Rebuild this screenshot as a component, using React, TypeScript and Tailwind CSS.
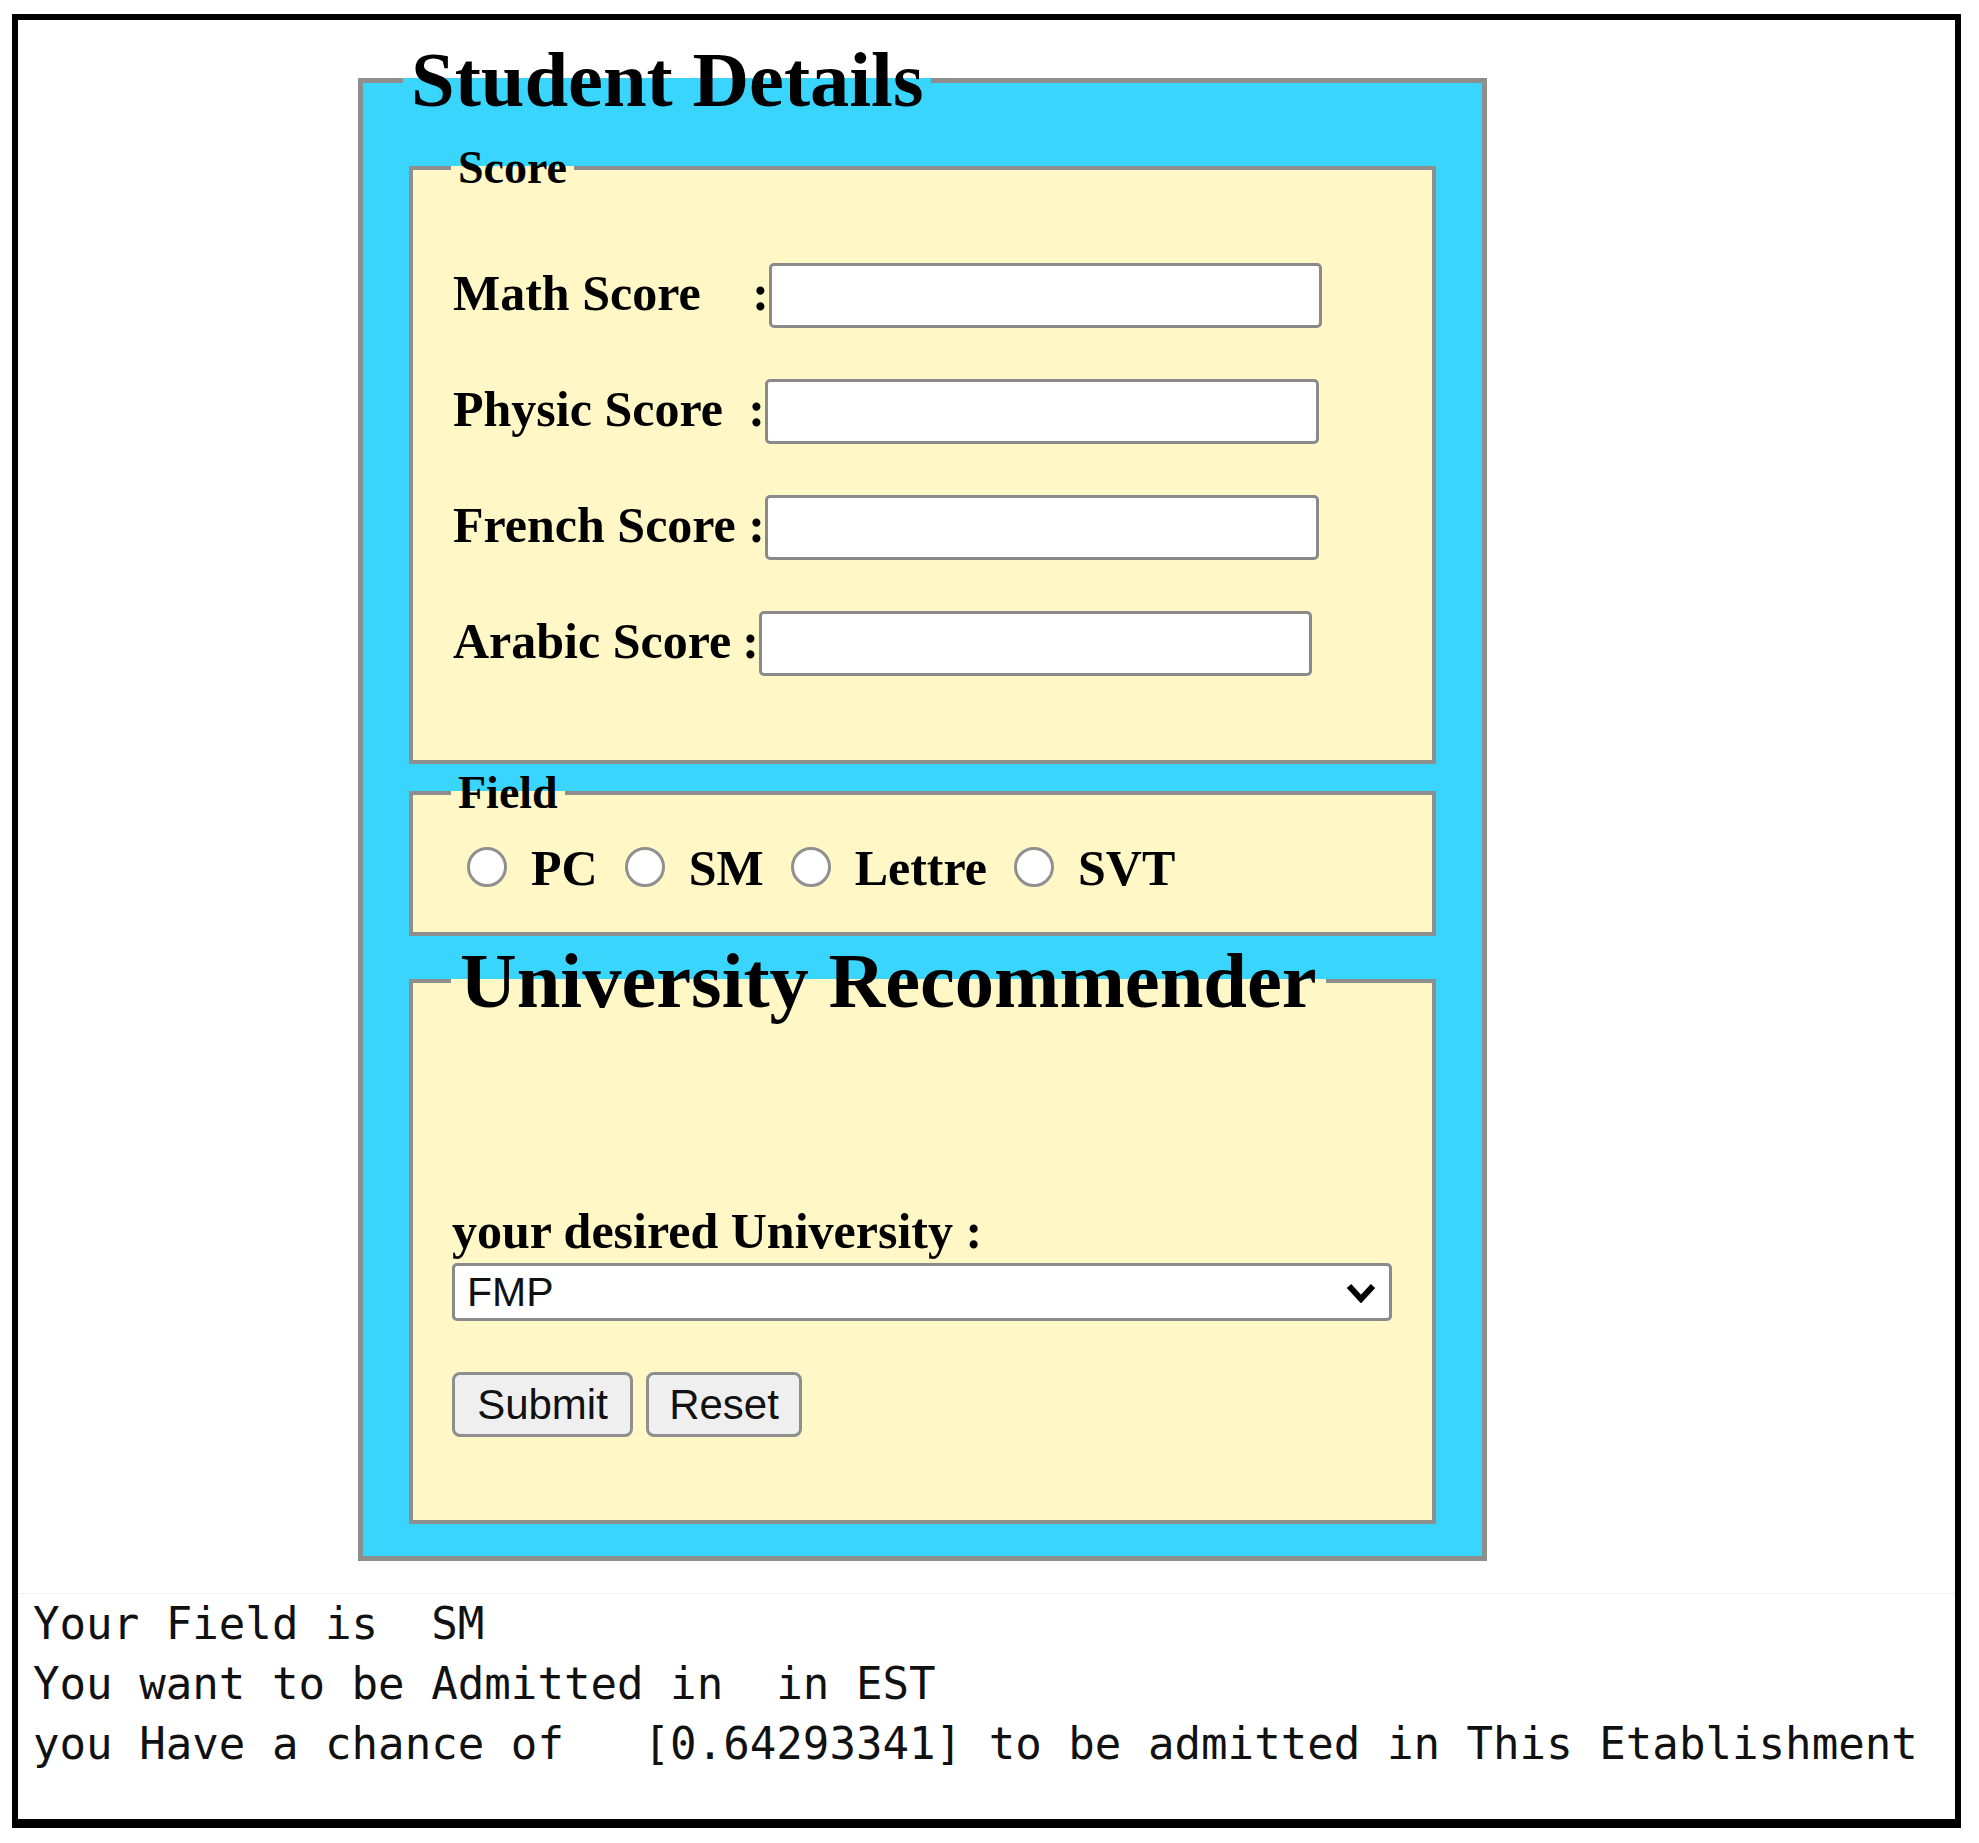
import React from "react";

const SERIF = "font-['Liberation_Serif','Times_New_Roman',serif]";
const SANS = "font-['Liberation_Sans',Arial,sans-serif]";

const scoreRows = [
  { label: "Math Score", lw: "w-[316px]", iw: "w-[553px]" },
  { label: "Physic Score", lw: "w-[312px]", iw: "w-[554px]" },
  { label: "French Score", lw: "w-[312px]", iw: "w-[554px]" },
  { label: "Arabic Score", lw: "w-[306px]", iw: "w-[553px]" },
];

const fields = ["PC", "SM", "Lettre", "SVT"];

function Radio() {
  return (
    <span className="block w-[40px] h-[40px] shrink-0 rounded-full border-[3px] border-[#909090] bg-white" />
  );
}

export default function App() {
  return (
    <div className="w-[1979px] h-[1843px] bg-white pl-[12px] pt-[14px] text-black">
      <div className="w-[1949px] h-[1814px] border-[6px] border-b-[9px] border-black bg-white">
        {/* Outer fieldset */}
        <fieldset
          className={`${SERIF} ml-[340px] mt-[16px] w-[1129px] border-[5px] border-[#8e8e8e] bg-[#39d5fd] px-[46px] pt-[18px] pb-[32px]`}
        >
          <legend className="ml-[-6px] px-[8px] text-[78.5px] leading-[88px] font-bold whitespace-nowrap">
            Student Details
          </legend>

          {/* Score */}
          <fieldset className="border-[4px] border-[#8e8e8e] bg-[#fff8c6] pl-[40px] pt-[69px] pb-[84px]">
            <legend className="ml-[-2px] px-[7px] text-[46px] leading-[52px] font-bold">
              Score
            </legend>
            <div className="flex flex-col gap-[51px]">
              {scoreRows.map((r) => (
                <div key={r.label} className="flex h-[65px] items-center">
                  <div
                    className={`${r.lw} flex justify-between pb-[5px] text-[50px] leading-[56px] font-bold whitespace-nowrap`}
                  >
                    <span>{r.label}</span>
                    <span>:</span>
                  </div>
                  <div
                    className={`${r.iw} h-[65px] rounded-[5px] border-[3px] border-[#8a8a8a] bg-white`}
                  />
                </div>
              ))}
            </div>
          </fieldset>

          {/* Field */}
          <fieldset className="mt-[3px] border-[4px] border-[#8e8e8e] bg-[#fff8c6] pl-[40px] pt-[20px] pb-[37px]">
            <legend className="ml-[-2px] px-[7px] text-[46px] leading-[52px] font-bold">
              Field
            </legend>
            <div className="flex h-[56px] items-center pl-[14px]">
              {fields.map((f, i) => (
                <div key={f} className={`flex items-center ${i > 0 ? "ml-[27px]" : ""}`}>
                  <Radio />
                  <span className="ml-[24px] pt-[2px] text-[50px] font-bold leading-[56px]">
                    {f}
                  </span>
                </div>
              ))}
            </div>
          </fieldset>

          {/* University Recommender */}
          <fieldset className="mt-[1px] border-[4px] border-[#8e8e8e] bg-[#fff8c6] pl-[39px] pt-[178px] pb-[83px]">
            <legend className="ml-[-1px] px-[9px] text-[78.5px] leading-[88px] font-bold whitespace-nowrap">
              University Recommender
            </legend>
            <div className="text-[50px] font-bold leading-[56px] whitespace-nowrap">
              your desired University :
            </div>
            <div
              className={`${SANS} mt-[4px] flex h-[58px] w-[940px] items-center justify-between rounded-[5px] border-[3px] border-[#8a8a8a] bg-white pl-[12px] pr-[13px] text-[41px] leading-none text-[#111]`}
            >
              <span className="leading-none">FMP</span>
              <svg width="30" height="20" viewBox="0 0 30 20" className="mt-[2px]">
                <polyline
                  points="3,3 15,16 27,3"
                  fill="none"
                  stroke="#000"
                  strokeWidth="6"
                  strokeLinejoin="miter"
                />
              </svg>
            </div>
            <div className={`${SANS} mt-[51px] flex gap-[13px] text-[42px] leading-none text-[#111]`}>
              <div className="flex h-[65px] w-[181px] items-center justify-center rounded-[8px] border-[3px] border-[#8e8e8e] bg-[#efefef]">
                Submit
              </div>
              <div className="flex h-[65px] w-[156px] items-center justify-center rounded-[8px] border-[3px] border-[#8e8e8e] bg-[#efefef]">
                Reset
              </div>
            </div>
          </fieldset>
        </fieldset>

        {/* Output */}
        <div className="mt-[32px] border-t border-[#f1f1f1]">
          <div className="pl-[15px] font-['DejaVu_Sans_Mono',monospace] text-[44.1px] leading-[60px] whitespace-pre text-[#111]">
            <div>{"Your Field is  SM"}</div>
            <div>{"You want to be Admitted in  in EST"}</div>
            <div>{"you Have a chance of   [0.64293341] to be admitted in This Etablishment"}</div>
          </div>
        </div>
      </div>
    </div>
  );
}
